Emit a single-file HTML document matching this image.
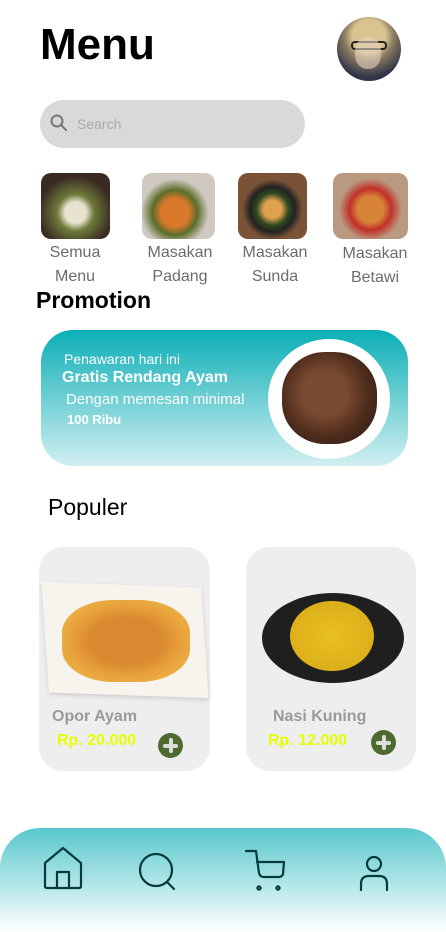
<!DOCTYPE html>
<html><head><meta charset="utf-8"><style>
*{margin:0;padding:0;box-sizing:border-box}
body{width:446px;height:932px;background:#fff;font-family:"Liberation Sans",sans-serif;position:relative;overflow:hidden}
.a{position:absolute}
.cat{position:absolute;top:173px;height:66px;border-radius:10px;overflow:hidden}
.lbl{position:absolute;top:241px;color:#6b6b6b;font-size:16px;line-height:24px;text-align:center}
.card{position:absolute;top:547px;width:171px;height:224px;background:#eeeeee;border-radius:24px}
.name{position:absolute;top:708px;color:#9a9a9a;font-weight:bold;font-size:16px}
.price{position:absolute;top:732px;color:#e6ff00;font-weight:bold;font-size:16px}
.plus{position:absolute;width:25px;height:25px;border-radius:50%;background:#4e6b2f}
.plus:before{content:"";position:absolute;left:5px;top:10.5px;width:15px;height:4px;background:#ddd;border-radius:2px}
.plus:after{content:"";position:absolute;left:10.5px;top:5px;width:4px;height:15px;background:#ddd;border-radius:2px}
</style></head><body>
<div class="a" style="left:40px;top:20px;font-size:44px;font-weight:bold;color:#000">Menu</div>
<div class="a" style="left:337px;top:17px;width:64px;height:64px;border-radius:50%;overflow:hidden;background:radial-gradient(circle at 50% 30%,#d9c48f 0 30%,#8a7a60 45%,#2d3548 75%)">
<div class="a" style="left:14px;top:24px;width:36px;height:9px;border:2px solid #222;border-radius:4px"></div>
<div class="a" style="left:18px;top:20px;width:26px;height:32px;border-radius:45%;background:#e6d2c0;opacity:.6"></div></div>
<div class="a" style="left:40px;top:100px;width:265px;height:48px;border-radius:24px;background:#d9d9d9"></div>
<svg class="a" style="left:49px;top:113px" width="20" height="20" viewBox="0 0 20 20"><circle cx="8" cy="8" r="5.5" fill="none" stroke="#777" stroke-width="2"/><line x1="12" y1="12" x2="17" y2="17" stroke="#777" stroke-width="2" stroke-linecap="round"/></svg>
<div class="a" style="left:77px;top:116px;font-size:14px;color:#aaa">Search</div>

<div class="cat" style="left:41px;width:69px;background:radial-gradient(circle at 50% 60%,#e8e3cf 0 20%,#6d7a3a 35%,#3a2a22 70%)"></div>
<div class="cat" style="left:142px;width:73px;background:radial-gradient(circle at 45% 60%,#d9782a 0 25%,#5b6d2a 40%,#cfc9c2 60%)"></div>
<div class="cat" style="left:238px;width:69px;background:radial-gradient(circle at 50% 55%,#dfa050 0 18%,#2f4a20 32%,#222 45%,#7a5336 60%)"></div>
<div class="cat" style="left:333px;width:75px;background:radial-gradient(circle at 50% 55%,#d88438 0 25%,#c2302a 40%,#b99a80 60%)"></div>
<div class="lbl" style="left:35px;width:80px">Semua<br>Menu</div>
<div class="lbl" style="left:138px;width:84px">Masakan<br>Padang</div>
<div class="lbl" style="left:233px;width:84px">Masakan<br>Sunda</div>
<div class="lbl" style="left:333px;width:84px;top:242px">Masakan<br>Betawi</div>

<div class="a" style="left:36px;top:287px;font-size:23px;font-weight:bold;color:#000">Promotion</div>
<div class="a" style="left:41px;top:330px;width:367px;height:136px;border-radius:32px;background:linear-gradient(#0aafb6,#d2eff1)"></div>
<div class="a" style="left:268px;top:339px;width:122px;height:120px;border-radius:50%;background:#fff"></div>
<div class="a" style="left:282px;top:352px;width:95px;height:92px;border-radius:45%;background:radial-gradient(circle at 45% 45%,#7a4a30 0 30%,#4d2c1c 60%,#3a2218 80%)"></div>
<div class="a" style="left:64px;top:351px;color:#fff;font-size:14px">Penawaran hari ini</div>
<div class="a" style="left:62px;top:369px;color:#fff;font-size:16px;font-weight:bold">Gratis Rendang Ayam</div>
<div class="a" style="left:66px;top:391px;color:#fff;font-size:15px">Dengan memesan minimal</div>
<div class="a" style="left:67px;top:412px;color:#fff;font-size:13px;font-weight:bold">100 Ribu</div>

<div class="a" style="left:48px;top:494px;font-size:23px;color:#000">Populer</div>
<div class="card" style="left:39px"></div>
<div class="card" style="left:246px;width:170px"></div>
<div class="a" style="left:45px;top:585px;width:160px;height:110px;background:#f7f4ee;transform:skewY(6deg) rotate(-4deg);box-shadow:0 2px 4px #ccc"></div>
<div class="a" style="left:62px;top:600px;width:128px;height:82px;border-radius:40%;background:radial-gradient(#d98a30 0 40%,#e8a03a 60%,#f0c050)"></div>
<div class="a" style="left:262px;top:593px;width:142px;height:90px;border-radius:50%;background:#1f1f1f"></div>
<div class="a" style="left:290px;top:601px;width:84px;height:70px;border-radius:50%;background:radial-gradient(#e8c020,#d8a818)"></div>
<div class="name" style="left:52px">Opor Ayam</div>
<div class="name" style="left:273px">Nasi Kuning</div>
<div class="price" style="left:57px">Rp. 20.000</div>
<div class="price" style="left:268px">Rp. 12.000</div>
<div class="plus" style="left:158px;top:733px"></div>
<div class="plus" style="left:371px;top:730px"></div>

<div class="a" style="left:0;top:828px;width:446px;height:104px;border-radius:40px 40px 0 0;background:linear-gradient(#58c8cc,#fff)"></div>
<svg class="a" style="left:0;top:828px" width="446" height="104" viewBox="0 0 446 104" fill="none" stroke="#053b3d" stroke-width="2.2" stroke-linecap="round" stroke-linejoin="round">
<path d="M45 35 L63 20 L81 35 V58 Q81 60 79 60 H47 Q45 60 45 58 Z"/><path d="M57 60 V44 H69 V60"/>
<circle cx="156" cy="42" r="16"/><line x1="167" y1="54" x2="174" y2="61"/>
<path d="M246 23 H256 L259 45 Q260 49 264 49 H279 Q282 49 283 46 L284 34 H257"/><circle cx="259" cy="60" r="1.6"/><circle cx="278" cy="60" r="1.6"/>
<circle cx="374" cy="36" r="7"/><path d="M361 62 V56 Q361 48 369 48 H379 Q387 48 387 56 V62"/>
</svg>
</body></html>
